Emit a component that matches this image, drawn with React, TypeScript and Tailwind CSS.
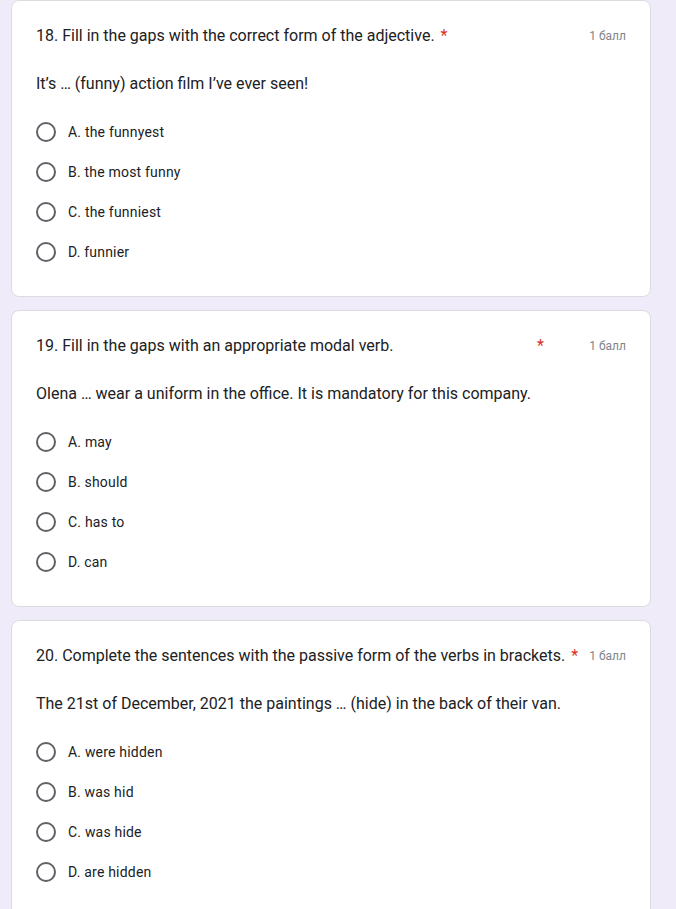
const questions = [
  {
    title: '18. Fill in the gaps with the correct form of the adjective.',
    titleWidth: '',
    prompt: 'It’s … (funny) action film I’ve ever seen!',
    options: ['A. the funnyest', 'B. the most funny', 'C. the funniest', 'D. funnier'],
  },
  {
    title: '19. Fill in the gaps with an appropriate modal verb.',
    titleWidth: 'w-[495px]',
    prompt: 'Olena … wear a uniform in the office. It is mandatory for this company.',
    options: ['A. may', 'B. should', 'C. has to', 'D. can'],
  },
  {
    title: '20. Complete the sentences with the passive form of the verbs in brackets.',
    titleWidth: '',
    prompt: 'The 21st of December, 2021 the paintings … (hide) in the back of their van.',
    options: ['A. were hidden', 'B. was hid', 'C. was hide', 'D. are hidden'],
  },
];

function Radio() {
  return <span className="h-5 w-5 shrink-0 rounded-full border-2 border-[#5f6368]" />;
}

function QuestionCard({ q }: { q: (typeof questions)[number] }) {
  return (
    <div className="rounded-lg border border-[#dadce0] bg-white px-6 pt-[23px] pb-6">
      <div className="flex items-center justify-between">
        <div className="flex items-center text-[16px] leading-6 text-[#202124]">
          <span className={q.titleWidth}>{q.title}</span>
          <span className="ml-[6px] text-[#d93025]">*</span>
        </div>
        <span className="text-[12px] text-[#80868b]">1 балл</span>
      </div>
      <p className="mt-6 text-[16px] leading-6 text-[#202124]">{q.prompt}</p>
      <div className="mt-4 flex flex-col">
        {q.options.map((o) => (
          <label key={o} className="flex h-10 items-center gap-3 text-[14px] text-[#202124]">
            <Radio />
            <span className="tracking-[0.2px]">{o}</span>
          </label>
        ))}
      </div>
    </div>
  );
}

export default function App() {
  return (
    <div className="min-h-screen bg-[#f0ebf8] font-['Roboto',sans-serif]">
      <div className="ml-[11px] flex w-[640px] flex-col gap-[13px]">
        {questions.map((q) => (
          <QuestionCard key={q.title} q={q} />
        ))}
      </div>
    </div>
  );
}
